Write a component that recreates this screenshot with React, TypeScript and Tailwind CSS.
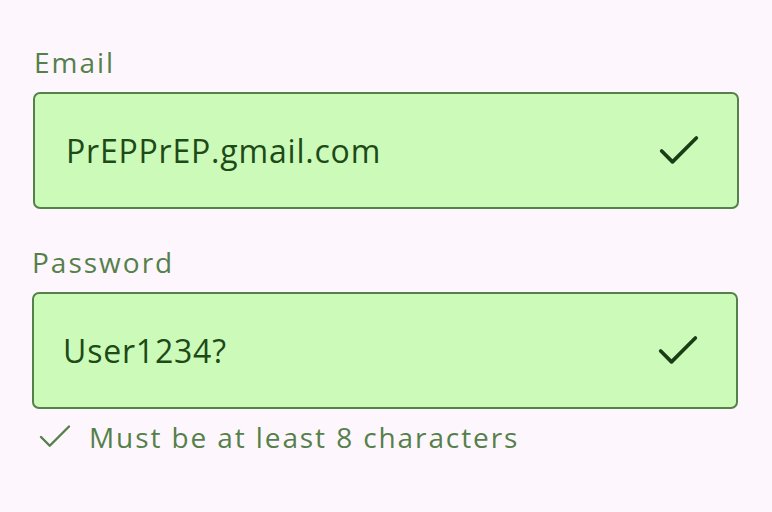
import { Check } from 'lucide-react'

function Field({
  label,
  value,
  labelClass,
  boxClass,
}: {
  label: string
  value: string
  labelClass: string
  boxClass: string
}) {
  return (
    <div className="flex flex-col">
      <label className={`text-[28px] leading-[34px] tracking-[2px] text-[#55804a] ${labelClass}`}>{label}</label>
      <div
        className={`flex h-[117px] items-center justify-between rounded-[7px] border-2 border-[#55804a] bg-[#ccfab9] pr-[32px] ${boxClass}`}
      >
        <span className="text-[32px] tracking-[0.8px] text-[#1d4a17]">{value}</span>
        <Check size={52} strokeWidth={1.7} className="text-[#1b3d16]" />
      </div>
    </div>
  )
}

export default function App() {
  return (
    <div
      className="h-[512px] w-[772px] bg-[#fdf7fd] pt-[45px]"
      style={{ fontFamily: '"Open Sans", "Liberation Sans", sans-serif' }}
    >
      <div className="ml-[33px] w-[706px]">
        <Field label="Email" value="PrEPPrEP.gmail.com" labelClass="ml-[1px] mb-[13px]" boxClass="pl-[31px]" />
      </div>
      <div className="ml-[32px] mt-[36px] w-[706px]">
        <Field label="Password" value="User1234?" labelClass="mb-[13px]" boxClass="pl-[29px]" />
        <div className="mt-[11px] flex items-center gap-[13px] pl-[2px]">
          <Check size={42} strokeWidth={1.4} className="-my-[6px] text-[#55804a]" />
          <span className="text-[28px] leading-[34px] tracking-[1.9px] text-[#55804a]">
            Must be at least 8 characters
          </span>
        </div>
      </div>
    </div>
  )
}
